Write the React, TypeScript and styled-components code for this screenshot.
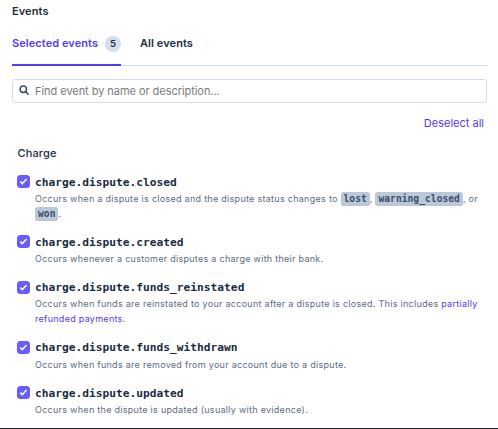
import React from 'react';
import styled, { createGlobalStyle } from 'styled-components';

const GlobalStyle = createGlobalStyle`
  * { box-sizing: border-box; }
  html, body { margin: 0; background: #fff; }
  body { font-family: Inter, sans-serif; color: #1a2c44; overflow: hidden; }
`;

const Page = styled.main`
  display: flex;
  flex-direction: column;
  width: 498px;
  height: 429px;
  padding: 3px 11px 0 12px;
  border-bottom: 1px solid #222326;
`;

const Heading = styled.h2`
  margin: 0;
  font-size: 11px;
  line-height: 16px;
  font-weight: 600;
  letter-spacing: 0.1px;
`;

const TabBar = styled.div`
  display: flex;
  flex: none;
  gap: 19px;
  height: 36px;
  margin-top: 11px;
  box-shadow: inset 0 -1px #d5dbe5;
`;

const Tab = styled.button<{ $active?: boolean }>`
  display: flex;
  align-items: flex-start;
  gap: 7px;
  padding: 5px 0 0;
  border: 0;
  border-bottom: 2px solid ${(p) => (p.$active ? '#533afd' : 'transparent')};
  background: none;
  font: 600 11px/17px Inter, sans-serif;
  letter-spacing: 0.07px;
  color: ${(p) => (p.$active ? '#533afd' : '#1a2c44')};
`;

const Count = styled.span`
  width: 16px;
  height: 16px;
  margin-top: 1px;
  border-radius: 8px;
  background: #d4dee9;
  color: #1a2c44;
  font-size: 9.5px;
  line-height: 16px;
  text-align: center;
`;

const Search = styled.label`
  display: flex;
  flex: none;
  align-items: center;
  gap: 6px;
  height: 24px;
  margin-top: 13px;
  padding-left: 6px;
  border: 1px solid #d5dee8;
  border-radius: 3px;
  svg { flex: none; margin-top: -2px; }
`;

const SearchInput = styled.input`
  flex: 1;
  padding: 0;
  border: 0;
  outline: 0;
  background: none;
  font: 400 11px/16px Inter, sans-serif;
  letter-spacing: -0.05px;
  &::placeholder { color: #7b7b7b; opacity: 1; }
`;

const Deselect = styled.button`
  align-self: flex-end;
  margin: 12px 3px 0 0;
  padding: 0;
  border: 0;
  background: none;
  font: 400 11px/16px Inter, sans-serif;
  color: #533afd;
`;

const GroupTitle = styled.h3`
  margin: 14px 0 0 5.5px;
  font-size: 11px;
  line-height: 16px;
  font-weight: 550;
  letter-spacing: 0.12px;
`;

const EventList = styled.ul`
  display: flex;
  flex-direction: column;
  gap: 12.5px;
  margin: 12px 0 0;
  padding: 0 4px 0 5px;
  list-style: none;
`;

const EventRow = styled.li`
  display: flex;
  gap: 5px;
`;

const Check = styled.span`
  display: flex;
  flex: none;
  align-items: center;
  justify-content: center;
  width: 13px;
  height: 13px;
  margin-top: 2px;
  border-radius: 3.5px;
  background: #675dff;
`;

const EventName = styled.div`
  padding-top: 0.6px;
  font: 700 11.22px/17.2px "DejaVu Sans Mono", monospace;
`;

const Description = styled.p`
  margin: 0;
  font-size: 9px;
  line-height: 15px;
  letter-spacing: 0.28px;
  color: #5d6b82;
`;

const Code = styled.code`
  padding: 1px 3px 2px;
  border-radius: 2.5px;
  background: #bac8da;
  color: #3c4f69;
  font: 700 9.6px/12px "DejaVu Sans Mono", monospace;
  letter-spacing: 0.04px;
`;

const Link = styled.a`
  color: #533afd;
`;

const events: { name: string; body: React.ReactNode }[] = [
  {
    name: 'charge.dispute.closed',
    body: (
      <>
        Occurs when a dispute is closed and the dispute status changes to <Code>lost</Code>,{' '}
        <Code>warning_closed</Code>, or <Code>won</Code>.
      </>
    ),
  },
  { name: 'charge.dispute.created', body: 'Occurs whenever a customer disputes a charge with their bank.' },
  {
    name: 'charge.dispute.funds_reinstated',
    body: (
      <>
        Occurs when funds are reinstated to your account after a dispute is closed. This includes{' '}
        <Link>partially refunded payments</Link>.
      </>
    ),
  },
  { name: 'charge.dispute.funds_withdrawn', body: 'Occurs when funds are removed from your account due to a dispute.' },
  { name: 'charge.dispute.updated', body: 'Occurs when the dispute is updated (usually with evidence).' },
];

export default function App() {
  return (
    <>
      <GlobalStyle />
      <Page>
        <Heading>Events</Heading>
        <TabBar>
          <Tab $active>
            Selected events <Count>5</Count>
          </Tab>
          <Tab>All events</Tab>
        </TabBar>
        <Search>
          <svg width="10" height="10" viewBox="0 0 10 10" fill="none" stroke="#3c4f69" strokeWidth="1.5">
            <circle cx="4.3" cy="4.3" r="3.2" />
            <path d="M6.6 6.6l2.6 2.6" strokeLinecap="round" />
          </svg>
          <SearchInput placeholder="Find event by name or description..." />
        </Search>
        <Deselect>Deselect all</Deselect>
        <GroupTitle>Charge</GroupTitle>
        <EventList>
          {events.map((event) => (
            <EventRow key={event.name}>
              <Check>
                <svg width="9" height="9" viewBox="0 0 9 9" fill="none" stroke="#fff" strokeWidth="1.5">
                  <path d="M1.3 4.6l2 2L7.6 1.9" />
                </svg>
              </Check>
              <div>
                <EventName>{event.name}</EventName>
                <Description>{event.body}</Description>
              </div>
            </EventRow>
          ))}
        </EventList>
      </Page>
    </>
  );
}
